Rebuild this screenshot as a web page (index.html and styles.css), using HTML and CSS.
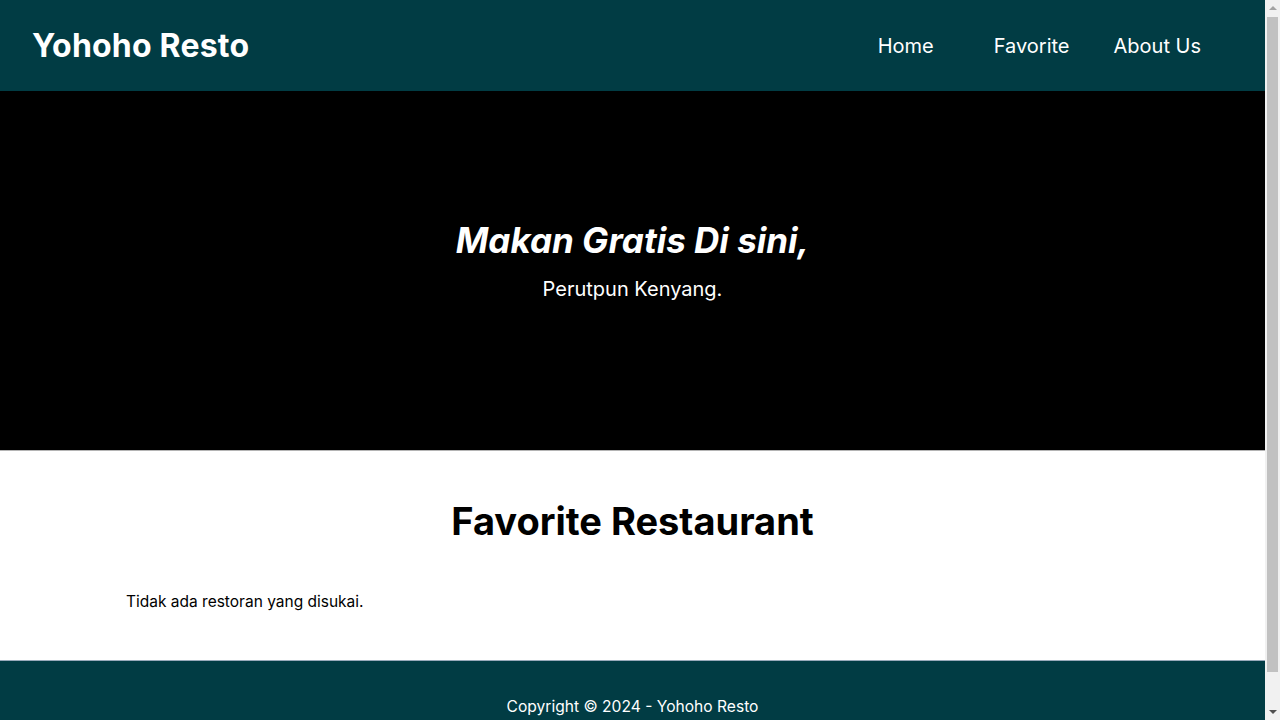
FILE: index.html
```html
<!DOCTYPE html>
<html lang="id">
<head>
<meta charset="utf-8">
<title>Yohoho Resto</title>
<link rel="stylesheet" href="styles.css">
</head>
<body>
<header class="app-bar">
  <h1 class="brand">Yohoho Resto</h1>
  <nav class="nav">
    <a class="nav-link nav-home" href="#">Home</a>
    <a class="nav-link nav-fav" href="#">Favorite</a>
    <a class="nav-link nav-about" href="#">About Us</a>
  </nav>
</header>
<section class="hero">
  <h2 class="hero-title">Makan Gratis Di sini,</h2>
  <p class="hero-sub">Perutpun Kenyang.</p>
</section>
<main class="content">
  <h2 class="section-title">Favorite Restaurant</h2>
  <p class="empty">Tidak ada restoran yang disukai.</p>
</main>
<footer class="footer">
  <p>Copyright © 2024 - Yohoho Resto</p>
</footer>
<div class="scrollbar" aria-hidden="true">
  <span class="sb-arrow sb-up"></span>
  <span class="sb-thumb"></span>
  <span class="sb-arrow sb-down"></span>
</div>
</body>
</html>
```
FILE: styles.css
```css
* { box-sizing: border-box; }
html, body { margin: 0; padding: 0; }
body {
  font-family: "Inter", "Noto Sans", sans-serif;
  color: #000;
  background: #fff;
  padding-right: 15px;
}
.app-bar {
  height: 91px;
  background: #013c44;
  display: flex;
  align-items: center;
  justify-content: space-between;
  padding: 0 64px 0 32px;
}
.brand {
  margin: 0;
  color: #fff;
  font-size: 32px;
  font-weight: 700;
  letter-spacing: 0.2px;
}
.nav { display: flex; align-items: center; }
.nav-link {
  color: #fff;
  text-decoration: none;
  font-size: 20px;
  font-weight: 400;
}
.nav-fav { margin-left: 60px; }
.nav-about { margin-left: 44px; }
.hero {
  height: 360px;
  background: #000;
  border-bottom: 1px solid #b4b4b4;
  color: #fff;
  display: flex;
  flex-direction: column;
  align-items: center;
  justify-content: center;
  padding-bottom: 22px;
}
.hero-title {
  margin: 0;
  font-size: 35px;
  font-style: italic;
  font-weight: 700;
}
.hero-sub {
  margin: 16px 0 0;
  font-size: 20px;
}
.content {
  height: 209px;
  padding: 47px 126px 0;
}
.section-title {
  margin: 0;
  text-align: center;
  font-size: 38px;
  font-weight: 700;
}
.empty {
  margin: 48px 0 0;
  font-size: 15.5px;
}
.footer {
  height: 94px;
  background: #013c44;
  border-top: 1px solid #9ab;
  color: #fff;
  display: flex;
  align-items: center;
  justify-content: center;
  padding-bottom: 2px;
}
.footer p { margin: 0; font-size: 15.6px; }

.scrollbar {
  position: fixed;
  top: 0;
  right: 0;
  width: 15px;
  height: 100vh;
  background: #f1f1f1;
  display: flex;
  flex-direction: column;
  align-items: center;
}
.sb-arrow {
  width: 0;
  height: 0;
  display: flex;
}
.sb-up {
  border-left: 4px solid transparent;
  border-right: 4px solid transparent;
  border-bottom: 4px solid #a3a3a3;
  flex: 0 0 auto;
  margin: 6px 0 7px;
}
.sb-down {
  border-left: 4px solid transparent;
  border-right: 4px solid transparent;
  border-top: 4px solid #505050;
  flex: 0 0 auto;
  margin: 7px 0 6px;
}
.sb-thumb {
  flex: 0 0 655px;
  width: 11px;
  background: #c1c1c1;
  margin-bottom: auto;
}
```
